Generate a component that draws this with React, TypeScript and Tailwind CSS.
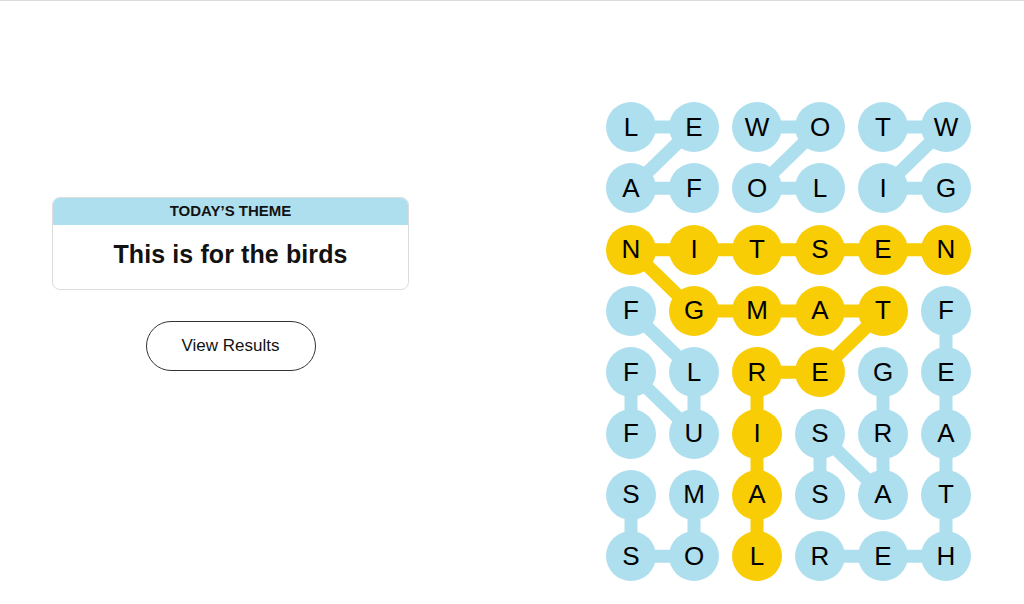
const BLUE = "#aedfee";
const YELLOW = "#f8cd05";

const letters = [
  "LEWOTW",
  "AFOLIG",
  "NITSEN",
  "FGMATF",
  "FLREGE",
  "FUISRA",
  "SMASAT",
  "SOLREH",
];

// cells on the spangram (row, col)
const spangram: [number, number][] = [
  [2, 5], [2, 4], [2, 3], [2, 2], [2, 1], [2, 0],
  [3, 1], [3, 2], [3, 3], [3, 4],
  [4, 3], [4, 2], [5, 2], [6, 2], [7, 2],
];

// each found word as a path of cells
const words: { color: string; path: [number, number][] }[] = [
  { color: BLUE, path: [[0, 0], [0, 1], [1, 0], [1, 1]] }, // LEAF
  { color: BLUE, path: [[0, 2], [0, 3], [1, 2], [1, 3]] }, // WOOL
  { color: BLUE, path: [[0, 4], [0, 5], [1, 4], [1, 5]] }, // TWIG
  { color: BLUE, path: [[3, 0], [4, 1], [5, 1], [4, 0], [5, 0]] }, // FLUFF
  { color: BLUE, path: [[6, 1], [7, 1], [7, 0], [6, 0]] }, // MOSS
  { color: BLUE, path: [[3, 5], [4, 5], [5, 5], [6, 5], [7, 5], [7, 4], [7, 3]] }, // FEATHER
  { color: BLUE, path: [[4, 4], [5, 4], [6, 4], [5, 3], [6, 3]] }, // GRASS
  { color: YELLOW, path: spangram },
];

const CX = 63;
const CY = 61.33;
const cx = (c: number) => 25 + c * CX;
const cy = (r: number) => 25 + r * CY;

const isSpan = (r: number, c: number) =>
  spangram.some(([a, b]) => a === r && b === c);

const Board = () => (
  <div className="relative">
    <svg
      className="absolute left-0 top-0"
      width={365}
      height={480}
      viewBox="0 0 365 480"
    >
      {words.map((w, i) => (
        <polyline
          key={i}
          points={w.path.map(([r, c]) => `${cx(c)},${cy(r)}`).join(" ")}
          fill="none"
          stroke={w.color}
          strokeWidth={13}
          strokeLinejoin="round"
        />
      ))}
    </svg>
    <div className="relative grid grid-cols-[repeat(6,50px)] gap-x-[13px] gap-y-[11.33px]">
      {letters.map((row, r) =>
        row.split("").map((ch, c) => (
          <div
            key={`${r}-${c}`}
            className={`w-[50px] h-[50px] rounded-full flex items-center justify-center text-[26px] text-black ${
              isSpan(r, c) ? "bg-[#f8cd05]" : "bg-[#aedfee]"
            }`}
          >
            {ch}
          </div>
        ))
      )}
    </div>
  </div>
);

const App = () => {
  return (
    <div
      className="w-[1024px] h-[604px] bg-white border-t border-[#dcdcdc] overflow-hidden"
      style={{ fontFamily: '"Liberation Sans", Arial, sans-serif' }}
    >
      <div className="flex pt-[101px]">
        <div className="ml-[52px] w-[357px] mt-[95px] flex flex-col items-center">
          <div className="w-full rounded-lg border border-[#dcdcdc] overflow-hidden">
            <div className="h-[27px] bg-[#aedfee] flex items-center justify-center text-[15px] font-bold text-[#121212]">
              TODAY’S THEME
            </div>
            <div className="h-[64px] flex items-center justify-center text-[25px] font-bold text-[#121212] tracking-[0.1px] pb-[4px]">
              This is for the birds
            </div>
          </div>
          <button className="mt-[31px] w-[170px] h-[50px] rounded-full border border-[#333] text-[17px] text-[#121212]">
            View Results
          </button>
        </div>
        <div className="ml-[197px]">
          <Board />
        </div>
      </div>
    </div>
  );
};

export default App;
